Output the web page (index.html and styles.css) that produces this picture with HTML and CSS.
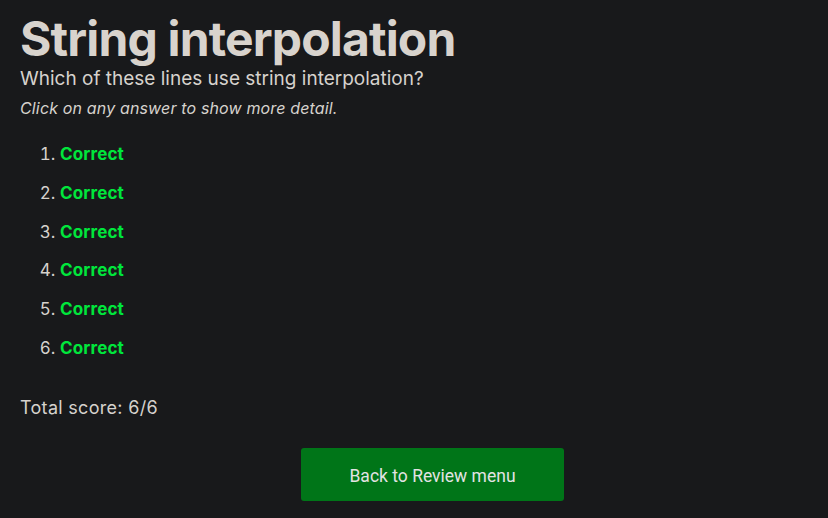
FILE: index.html
```html
<!DOCTYPE html>
<html>
<head>
<meta charset="utf-8">
<link rel="stylesheet" href="styles.css">
</head>
<body>
<main class="page">
  <h1 class="title">String interpolation</h1>
  <p class="question">Which of these lines use string interpolation?</p>
  <p class="hint">Click on any answer to show more detail.</p>
  <ol class="answers">
    <li><span class="correct">Correct</span></li>
    <li><span class="correct">Correct</span></li>
    <li><span class="correct">Correct</span></li>
    <li><span class="correct">Correct</span></li>
    <li><span class="correct">Correct</span></li>
    <li><span class="correct">Correct</span></li>
  </ol>
  <p class="score">Total score: 6/6</p>
  <div class="actions">
    <button class="back">Back to Review menu</button>
  </div>
</main>
</body>
</html>
```

FILE: styles.css
```css
html, body {
  margin: 0;
  background: #18191b;
}
body {
  font-family: Inter, "Noto Sans", sans-serif;
  color: #d6d2cd;
}
.page {
  padding: 11px 20px 0 20px;
}
.title {
  margin: 0;
  font-size: 48px;
  font-weight: 700;
  line-height: 56px;
  letter-spacing: -0.85px;
  color: #d8d3cd;
}
.question {
  margin: 0;
  font-size: 19px;
  line-height: 24px;
}
.hint {
  margin: 5px 0 0 0;
  font-size: 16px;
  font-style: italic;
  line-height: 24px;
  letter-spacing: 0.15px;
}
.answers {
  margin: 22px 0 0 0;
  padding-left: 40px;
  font-size: 17px;
  line-height: 24px;
}
.answers li {
  margin-bottom: 14.8px;
}
.correct {
  color: #00e63c;
  font-weight: 700;
  letter-spacing: 0.15px;
}
.score {
  margin: 35px 0 0 0;
  font-size: 18px;
  line-height: 26px;
  letter-spacing: 0.3px;
}
.actions {
  display: flex;
  justify-content: center;
  padding-left: 37px;
  margin-top: 27px;
}
.back {
  width: 263px;
  height: 53px;
  padding: 3px 0 0 0;
  background: #007518;
  color: #e3e3e3;
  border: none;
  border-radius: 3px;
  font-family: Roboto, sans-serif;
  font-size: 17.5px;
}
```
